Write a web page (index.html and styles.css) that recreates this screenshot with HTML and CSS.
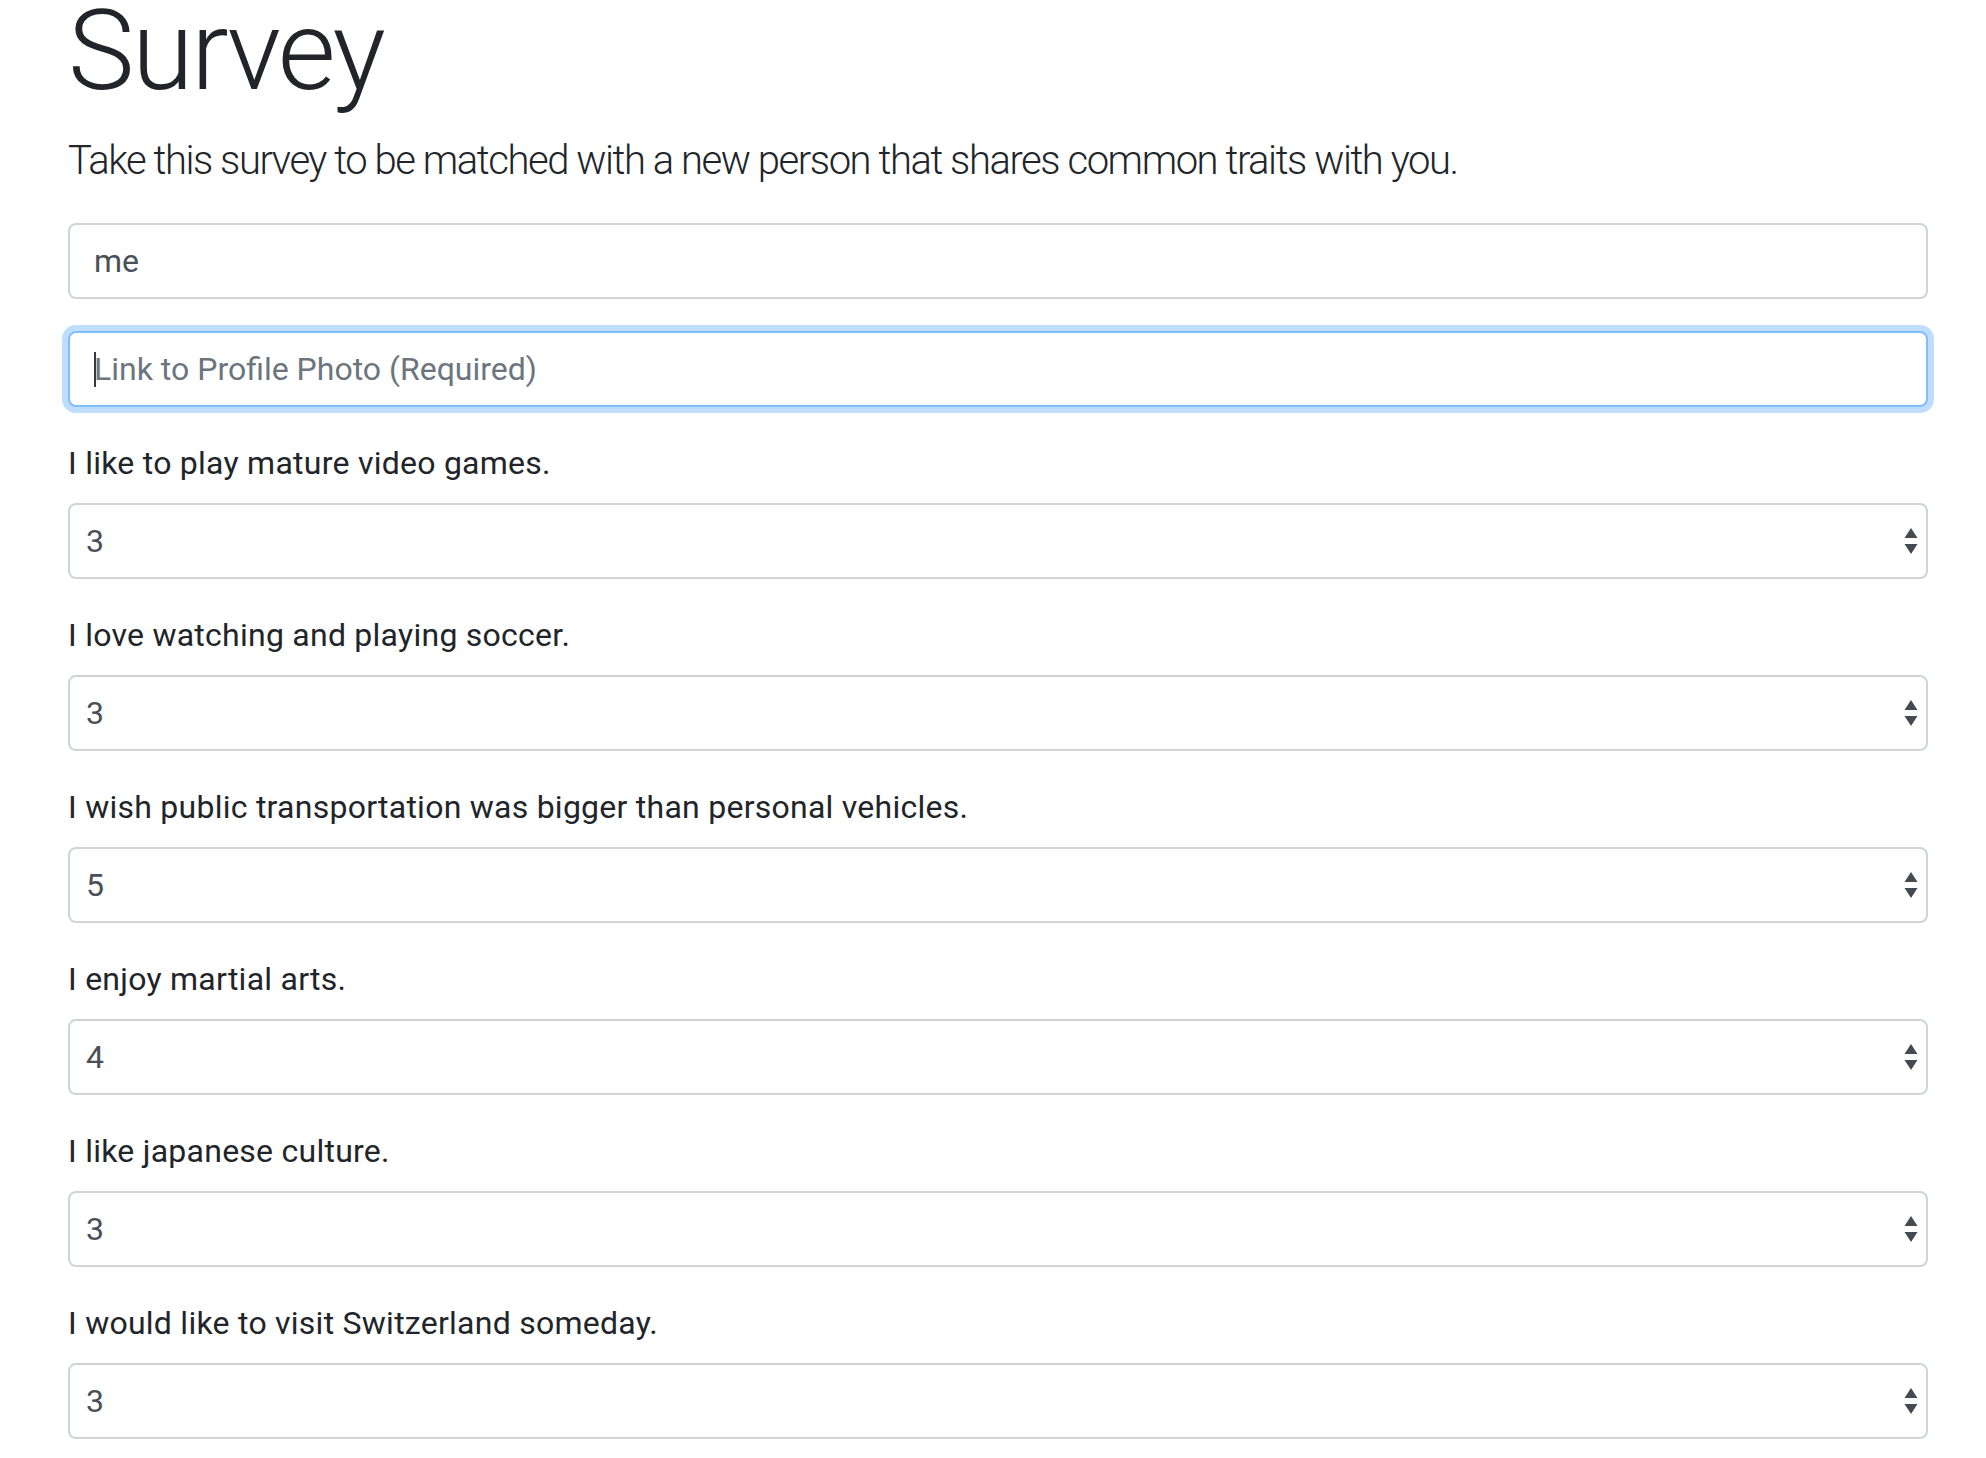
FILE: index.html
```html
<!DOCTYPE html>
<html lang="en">
<head>
<meta charset="utf-8">
<title>Survey</title>
<link rel="stylesheet" href="styles.css">
</head>
<body>
<div class="container">
  <h1 class="display">Survey</h1>
  <p class="lead">Take this survey to be matched with a new person that shares common traits with you.</p>
  <form class="survey">
    <div class="group">
      <div class="control">me</div>
    </div>
    <div class="group">
      <div class="control focused"><span class="caret"></span><span class="placeholder">Link to Profile Photo (Required)</span></div>
    </div>
    <div class="group">
      <div class="label">I like to play mature video games.</div>
      <div class="control select"><span>3</span><svg class="arrows" width="14" height="30" viewBox="0 0 14 30"><path d="M7 2 L13.5 12 L0.5 12 Z M7 28 L13.5 18 L0.5 18 Z" fill="#444a52"/></svg></div>
    </div>
    <div class="group">
      <div class="label">I love watching and playing soccer.</div>
      <div class="control select"><span>3</span><svg class="arrows" width="14" height="30" viewBox="0 0 14 30"><path d="M7 2 L13.5 12 L0.5 12 Z M7 28 L13.5 18 L0.5 18 Z" fill="#444a52"/></svg></div>
    </div>
    <div class="group">
      <div class="label">I wish public transportation was bigger than personal vehicles.</div>
      <div class="control select"><span>5</span><svg class="arrows" width="14" height="30" viewBox="0 0 14 30"><path d="M7 2 L13.5 12 L0.5 12 Z M7 28 L13.5 18 L0.5 18 Z" fill="#444a52"/></svg></div>
    </div>
    <div class="group">
      <div class="label">I enjoy martial arts.</div>
      <div class="control select"><span>4</span><svg class="arrows" width="14" height="30" viewBox="0 0 14 30"><path d="M7 2 L13.5 12 L0.5 12 Z M7 28 L13.5 18 L0.5 18 Z" fill="#444a52"/></svg></div>
    </div>
    <div class="group">
      <div class="label">I like japanese culture.</div>
      <div class="control select"><span>3</span><svg class="arrows" width="14" height="30" viewBox="0 0 14 30"><path d="M7 2 L13.5 12 L0.5 12 Z M7 28 L13.5 18 L0.5 18 Z" fill="#444a52"/></svg></div>
    </div>
    <div class="group">
      <div class="label">I would like to visit Switzerland someday.</div>
      <div class="control select"><span>3</span><svg class="arrows" width="14" height="30" viewBox="0 0 14 30"><path d="M7 2 L13.5 12 L0.5 12 Z M7 28 L13.5 18 L0.5 18 Z" fill="#444a52"/></svg></div>
    </div>
  </form>
</div>
</body>
</html>
```
FILE: styles.css
```css
html, body {
  margin: 0;
  padding: 0;
  background: #ffffff;
  overflow: hidden;
}
body {
  font-family: Roboto, "Noto Sans", "Liberation Sans", sans-serif;
  font-size: 32px;
  line-height: 1.5;
  color: #212529;
}
.container {
  width: 1860px;
  padding-left: 68px;
}
.display {
  margin: 3px 0 32px 0;
  font-size: 112px;
  font-weight: 300;
  line-height: 96px;
  letter-spacing: -2.5px;
}
.lead {
  margin: 0 0 32px 0;
  font-size: 40px;
  font-weight: 300;
  line-height: 1.5;
  letter-spacing: -1.45px;
}
.survey {
  margin: 0;
}
.group {
  margin-bottom: 32px;
}
.label {
  margin-bottom: 16px;
  line-height: 48px;
  letter-spacing: 0.25px;
}
.control {
  box-sizing: border-box;
  height: 76px;
  border: 2px solid #ced4da;
  border-radius: 8px;
  display: flex;
  align-items: center;
  padding: 0 24px;
  color: #495057;
  font-size: 32px;
  background: #fff;
}
.focused {
  border-color: #80bdff;
  box-shadow: 0 0 0 6px rgba(0, 123, 255, 0.25);
}
.caret {
  width: 2px;
  height: 35px;
  background: #343a40;
  margin-right: -2px;
}
.placeholder {
  color: #6c757d;
}
.select {
  justify-content: space-between;
  padding: 0 8px 0 16px;
}
.arrows {
  display: block;
}
```
